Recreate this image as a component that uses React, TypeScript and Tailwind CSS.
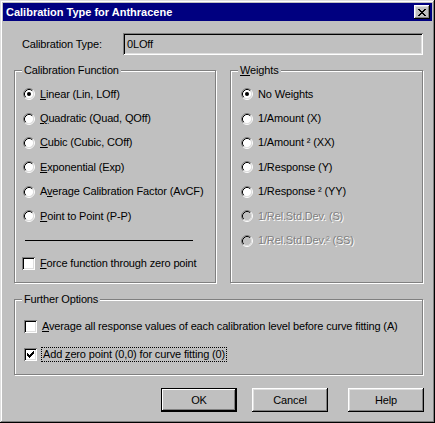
import type { ReactNode } from "react"

const face = "font-['Liberation_Sans',Arial,sans-serif] text-[11px] leading-[13px]"

const Radio = ({ checked, disabled }: { checked?: boolean; disabled?: boolean }) => (
  <svg width="12" height="12" viewBox="0 0 12 12" className="shrink-0">
    <circle cx="6" cy="6" r="4.5" fill={disabled ? "#c0c0c0" : "#ffffff"} />
    <path d="M2.11 9.89 A5.5 5.5 0 0 1 9.89 2.11" fill="none" stroke="#808080" />
    <path d="M9.89 2.11 A5.5 5.5 0 0 1 2.11 9.89" fill="none" stroke="#ffffff" />
    <path d="M2.82 9.18 A4.5 4.5 0 0 1 9.18 2.82" fill="none" stroke="#000000" />
    <path d="M9.18 2.82 A4.5 4.5 0 0 1 2.82 9.18" fill="none" stroke="#dfdfdf" />
    {checked && <circle cx="6" cy="6" r="2" fill="#000000" />}
  </svg>
)

const checkCols = [2, 3, 4, 3, 2, 1, 0]

const Checkbox = ({ checked }: { checked?: boolean }) => (
  <div className="w-[13px] h-[13px] shrink-0 bg-white shadow-[inset_1px_1px_#808080,inset_-1px_-1px_#ffffff,inset_2px_2px_#000000,inset_-2px_-2px_#dfdfdf] flex items-center justify-center">
    {checked && (
      <svg width="7" height="7" viewBox="0 0 7 7" shapeRendering="crispEdges">
        {checkCols.map((top, i) => (
          <rect key={i} x={i} y={top} width="1" height="3" fill="#000" />
        ))}
      </svg>
    )}
  </div>
)

const closeRows: [number, number][][] = [
  [[0, 2], [6, 2]],
  [[1, 2], [5, 2]],
  [[2, 4]],
  [[3, 2]],
  [[2, 4]],
  [[1, 2], [5, 2]],
  [[0, 2], [6, 2]],
]

const GroupBox = ({ label, className, children }: { label: ReactNode; className: string; children: ReactNode }) => (
  <div className={`relative border border-[#808080] shadow-[1px_1px_0_#ffffff,inset_1px_1px_0_#ffffff] ${className}`}>
    <div className="absolute left-[7px] top-[-7px] bg-[#c0c0c0] px-[2px]">{label}</div>
    {children}
  </div>
)

const Key = ({ children }: { children: ReactNode }) => (
  <span className="underline underline-offset-[1px]">{children}</span>
)

const calibrationFunctions: { label: ReactNode; checked?: boolean }[] = [
  { label: <><Key>L</Key>inear (Lin, LOff)</>, checked: true },
  { label: <><Key>Q</Key>uadratic (Quad, QOff)</> },
  { label: <><Key>C</Key>ubic (Cubic, COff)</> },
  { label: <><Key>E</Key>xponential (Exp)</> },
  { label: <>A<Key>v</Key>erage Calibration Factor (AvCF)</> },
  { label: <><Key>P</Key>oint to Point (P-P)</> },
]

const weights: { label: string; checked?: boolean; disabled?: boolean }[] = [
  { label: "No Weights", checked: true },
  { label: "1/Amount (X)" },
  { label: "1/Amount ² (XX)" },
  { label: "1/Response (Y)" },
  { label: "1/Response ² (YY)" },
  { label: "1/Rel.Std.Dev. (S)", disabled: true },
  { label: "1/Rel.Std.Dev.² (SS)", disabled: true },
]

const Button = ({ children, isDefault, className }: { children: ReactNode; isDefault?: boolean; className?: string }) => (
  <div
    className={`h-[24px] w-[76px] flex items-center justify-center ${
      isDefault
        ? "shadow-[inset_1px_1px_#000000,inset_-1px_-1px_#000000,inset_-2px_-2px_#000000,inset_2px_2px_#ffffff,inset_-3px_-3px_#808080]"
        : "shadow-[inset_-1px_-1px_#000000,inset_1px_1px_#ffffff,inset_-2px_-2px_#808080,inset_2px_2px_#dfdfdf]"
    } ${className ?? ""}`}
  >
    {children}
  </div>
)

export default function App() {
  return (
    <div className={`w-[435px] h-[423px] bg-[#c0c0c0] p-[3px] text-black ${face} shadow-[inset_-1px_-1px_#000000,inset_1px_1px_#dfdfdf,inset_-2px_-2px_#808080,inset_2px_2px_#ffffff]`}>
      <div className="h-[18px] bg-[#000080] flex items-center justify-between pl-[3px] pr-[2px]">
        <span className="text-white font-bold">Calibration Type for Anthracene</span>
        <div className="w-[16px] h-[14px] bg-[#c0c0c0] flex items-center justify-center shadow-[inset_-1px_-1px_#000000,inset_1px_1px_#ffffff,inset_-2px_-2px_#808080,inset_2px_2px_#dfdfdf]">
          <svg width="8" height="7" viewBox="0 0 8 7" shapeRendering="crispEdges" className="mr-[1px]">
            {closeRows.flatMap((row, y) =>
              row.map(([x, w]) => <rect key={`${x}-${y}`} x={x} y={y} width={w} height="1" fill="#000" />)
            )}
          </svg>
        </div>
      </div>

      <div className="pl-[11px] tracking-[-0.15px]">
        <div className="mt-[12px] flex items-center h-[22px]">
          <div className="w-[109px] pl-[8px]">Calibration Type:</div>
          <div className="w-[300px] h-[22px] flex items-center pl-[4px] shadow-[inset_1px_1px_#808080,inset_-1px_-1px_#ffffff,inset_2px_2px_#000000,inset_-2px_-2px_#dfdfdf]">
            0LOff
          </div>
        </div>

        <div className="mt-[15px] flex gap-[14px]">
          <GroupBox label="Calibration Function" className="w-[202px] h-[213px]">
            <div className="pt-[11px] pl-[7px] flex flex-col">
              {calibrationFunctions.map((item, i) => (
                <div key={i} className="h-[24.4px] flex items-center gap-[5px] pl-[1px]">
                  <Radio checked={item.checked} />
                  <span>{item.label}</span>
                </div>
              ))}
              <div className="ml-[3px] mt-[12px] w-[168px] h-px bg-black" />
              <div className="mt-[16px] flex items-center gap-[5px]">
                <Checkbox />
                <span>
                  <Key>F</Key>orce function through zero point
                </span>
              </div>
            </div>
          </GroupBox>

          <GroupBox label={<><Key>W</Key>eights</>} className="w-[193px] h-[213px]">
            <div className="pt-[11px] pl-[10px] flex flex-col">
              {weights.map((item) => (
                <div key={item.label} className="h-[24.4px] flex items-center gap-[5px]">
                  <Radio checked={item.checked} disabled={item.disabled} />
                  <span className={item.disabled ? "text-[#808080] [text-shadow:1px_1px_0_#ffffff]" : ""}>
                    {item.label}
                  </span>
                </div>
              ))}
            </div>
          </GroupBox>
        </div>

        <GroupBox label="Further Options" className="mt-[16px] w-[409px] h-[76px]">
          <div className="pt-[20px] pl-[9px] flex flex-col gap-[14px]">
            <div className="flex items-center gap-[5px]">
              <Checkbox />
              <span>
                <Key>A</Key>verage all response values of each calibration level before curve fitting (A)
              </span>
            </div>
            <div className="flex items-center gap-[4px]">
              <Checkbox checked />
              <span className="border border-dotted border-black px-px">
                Add <Key>z</Key>ero point (0,0) for curve fitting (0)
              </span>
            </div>
          </div>
        </GroupBox>

        <div className="mt-[13px] flex">
          <Button isDefault className="ml-[147px]">OK</Button>
          <Button className="ml-[15px]">Cancel</Button>
          <Button className="ml-[20px]">Help</Button>
        </div>
      </div>
    </div>
  )
}
